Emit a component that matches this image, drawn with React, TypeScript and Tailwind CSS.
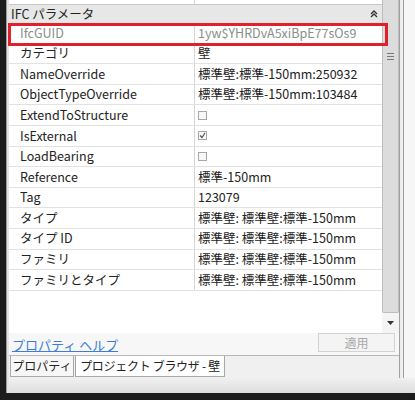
import React from 'react';

type Row = { label: string; value?: string; check?: boolean; readOnly?: boolean };

const rows: Row[] = [
  { label: 'IfcGUID', value: '1yw$YHRDvA5xiBpE77sOs9', readOnly: true },
  { label: 'カテゴリ', value: '壁' },
  { label: 'NameOverride', value: '標準壁:標準-150mm:250932' },
  { label: 'ObjectTypeOverride', value: '標準壁:標準-150mm:103484' },
  { label: 'ExtendToStructure', check: false },
  { label: 'IsExternal', check: true },
  { label: 'LoadBearing', check: false },
  { label: 'Reference', value: '標準-150mm' },
  { label: 'Tag', value: '123079' },
  { label: 'タイプ', value: '標準壁: 標準壁:標準-150mm' },
  { label: 'タイプ ID', value: '標準壁: 標準壁:標準-150mm' },
  { label: 'ファミリ', value: '標準壁: 標準壁:標準-150mm' },
  { label: 'ファミリとタイプ', value: '標準壁: 標準壁:標準-150mm' },
];

const font = { fontFamily: '"Noto Sans CJK JP", "Noto Sans", sans-serif' };

const Checkbox: React.FC<{ checked: boolean }> = ({ checked }) => (
  <span className="flex h-[9px] w-[9px] items-center justify-center border border-[#a8a8a8] bg-[#f8f8f8]">
    {checked && (
      <svg width="7" height="7" viewBox="0 0 7 7">
        <path d="M1 3.5 L3 5.5 L6 1" fill="none" stroke="#555" strokeWidth="1.2" />
      </svg>
    )}
  </span>
);

const PropertyRow: React.FC<{ row: Row }> = ({ row }) => (
  <div className="flex h-[20.6px] border-b border-[#e2e2e2] bg-white text-[12.5px] leading-none">
    <div
      className={`flex w-[186px] items-center border-r border-[#d6d6d6] pl-[11px] ${
        row.readOnly ? 'text-[#8c8c8c]' : 'text-[#222]'
      }`}
    >
      {row.label}
    </div>
    <div className={`flex flex-1 items-center pl-[3px] ${row.readOnly ? 'text-[#8c8c8c]' : 'text-[#222]'}`}>
      {row.check !== undefined ? <Checkbox checked={row.check} /> : row.value}
    </div>
  </div>
);

export default function App() {
  return (
    <div className="flex h-[400px] w-[415px] flex-col overflow-hidden bg-[#f0f0f0]" style={font}>
      <div className="flex flex-1">
        {/* 左の枠 */}
        <div className="w-[6px] bg-[#1c1c1c]" />
        <div className="w-[3px] border-l border-[#9a9a9a] bg-[#e4e4e4]" />

        <div className="flex flex-1 flex-col">
          <div className="flex flex-1 flex-col border-b border-[#b8b8b8]">
            <div className="flex h-[333px]">
              {/* プロパティ グリッド */}
              <div className="relative flex flex-1 flex-col bg-white">
                <div className="flex h-[5px] border-b border-[#c8c8c8] bg-white">
                  <div className="w-[186px] border-r border-[#d6d6d6]" />
                </div>
                <div className="flex h-[18px] items-center justify-between bg-[#e7e7e7] pl-[2px] pr-[4px] text-[12.5px] text-[#222]">
                  <span>IFC パラメータ</span>
                  <svg width="8" height="8" viewBox="0 0 8 8">
                    <path d="M1 4 L4 1 L7 4 M1 7 L4 4 L7 7" fill="none" stroke="#333" strokeWidth="1.3" />
                  </svg>
                </div>
                {rows.map((r) => (
                  <PropertyRow key={r.label} row={r} />
                ))}
                <div className="flex-1 bg-white" />
                <div className="absolute left-[-1px] top-[23px] h-[23px] w-[380px] border-[3px] border-[#e0202a]" />
              </div>

              {/* スクロールバー */}
              <div className="flex w-[17px] flex-col bg-[#f4f4f4]">
                <div className="flex h-[313px] items-start justify-center rounded-b-[2px] border-x border-b border-[#bdbdbd] bg-[#dcdcdc]">
                  <div className="mt-[53px] flex flex-col gap-[2px]">
                    <div className="h-px w-[7px] bg-[#777]" />
                    <div className="h-px w-[7px] bg-[#777]" />
                    <div className="h-px w-[7px] bg-[#777]" />
                  </div>
                </div>
                <div className="flex flex-1 items-center justify-center">
                  <svg width="7" height="4" viewBox="0 0 7 4">
                    <path d="M0 0 L7 0 L3.5 4 Z" fill="#333" />
                  </svg>
                </div>
              </div>
            </div>

            {/* ヘルプと適用 */}
            <div className="flex flex-1 items-start justify-between bg-[#f7f7f7] pl-[3px] pr-[4px]">
              <span className="mt-[2px] text-[13px] text-[#3b7dd8] underline">プロパティ ヘルプ</span>
              <button className="h-[19px] w-[77px] border border-[#d2d2d2] bg-[#f4f4f4] text-[12px] text-[#a8a8a8]">
                適用
              </button>
            </div>
          </div>

          {/* タブ */}
          <div className="flex h-[22px] items-start whitespace-nowrap pl-[1px] text-[12px] text-[#222]">
            <div className="flex h-[21px] w-[64px] items-center justify-center border-x border-b border-[#a8a8a8] bg-[#f7f7f7]">
              プロパティ
            </div>
            <div className="ml-[1px] flex h-[21px] w-[150px] items-center justify-center border border-t-0 border-[#a8a8a8] bg-white tracking-[-0.3px]">
              プロジェクト ブラウザ - 壁
            </div>
          </div>
          <div className="h-[15px] bg-gradient-to-b from-[#f0f0f0] to-[#dedede]" />
        </div>

        {/* 右の枠 */}
        <div className="flex w-[16px] flex-col">
          <div className="flex h-[378px]">
            <div className="w-[2px] border-l border-[#a0a0a0] bg-[#eaeaea]" />
            <div className="w-[3px] border-r border-[#9c9c9c] bg-[#f0f0f0]" />
            <div className="flex-1 bg-[#f6f6f6]" />
          </div>
          <div className="flex-1 bg-gradient-to-b from-[#f0f0f0] to-[#dedede]" />
        </div>
      </div>
      <div className="h-[7px] bg-[#1c1c1c]" />
    </div>
  );
}
